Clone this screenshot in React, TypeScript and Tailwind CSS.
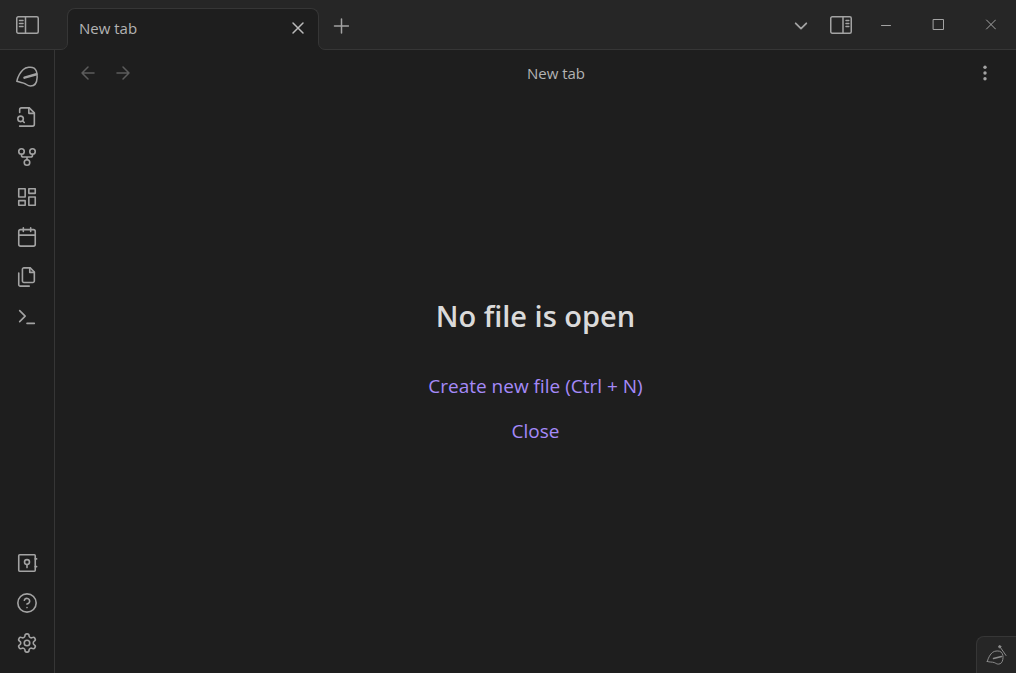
import type { ReactNode } from "react";

type IconProps = { children: ReactNode; className?: string; box?: string; stroke?: number };

function Icon({ children, className = "size-[22px]", box = "0 0 24 24", stroke = 1.75 }: IconProps) {
  return (
    <svg
      className={className}
      viewBox={box}
      fill="none"
      stroke="currentColor"
      strokeWidth={stroke}
      strokeLinecap="round"
      strokeLinejoin="round"
      aria-hidden="true"
    >
      {children}
    </svg>
  );
}

function IconButton({ label, className, children }: { label: string; className: string; children: ReactNode }) {
  return (
    <button type="button" aria-label={label} className={`flex shrink-0 items-center justify-center ${className}`}>
      {children}
    </button>
  );
}

const topTools = [
  {
    label: "Copilot",
    icon: (
      <Icon box="0 0 22 22" stroke={1.5}>
        <path d="M.8 15.300C1.600 11.500 3.800 6.800 7.300 3.500 10 1.100 15.300.3 18.100 2.200c2.700 1.900 3.200 5 3 9.400-.2 5-2.500 8.400-6.500 8.400-2.600 0-3.600-1.200-5.300-2.200-2.300-1.300-5-1.200-8.500-2.500z" />
        <path d="M8.500 11.600 20.400 8.200" strokeWidth="2.500" />
      </Icon>
    ),
  },
  {
    label: "Open quick switcher",
    icon: (
      <Icon>
        <path d="M4 22h14a2 2 0 0 0 2-2V7.500L14.500 2H6a2 2 0 0 0-2 2v3" />
        <path d="M14 2v6h6" />
        <circle cx="5" cy="14" r="3" />
        <path d="m9 18-1.500-1.500" />
      </Icon>
    ),
  },
  {
    label: "Open graph view",
    icon: (
      <Icon>
        <circle cx="12" cy="18" r="3" />
        <circle cx="6" cy="6" r="3" />
        <circle cx="18" cy="6" r="3" />
        <path d="M18 9v1a2 2 0 0 1-2 2H8a2 2 0 0 1-2-2V9M12 12v3" />
      </Icon>
    ),
  },
  {
    label: "Create new canvas",
    icon: (
      <Icon>
        <path d="M3 3h7v9H3zM14 3h7v5h-7zM14 12h7v9h-7zM3 16h7v5H3z" />
      </Icon>
    ),
  },
  {
    label: "Open daily note",
    icon: (
      <Icon>
        <rect x="3" y="4" width="18" height="18" rx="2" />
        <path d="M16 2v4M8 2v4M3 10h18" />
      </Icon>
    ),
  },
  {
    label: "Insert template",
    icon: (
      <Icon>
        <path d="M15.500 2H8.600c-.4 0-.8.2-1.100.5-.3.3-.5.7-.5 1.100v12.800c0 .4.2.8.5 1.100.3.3.7.5 1.100.5h9.800c.4 0 .8-.2 1.100-.5.3-.3.5-.7.5-1.100V6.500L15.500 2z" />
        <path d="M3 7.600v12.800c0 .4.2.8.5 1.100.3.3.7.5 1.100.5h9.800M15 2v5h5" />
      </Icon>
    ),
  },
  {
    label: "Open command palette",
    icon: (
      <Icon>
        <path d="m4 17 6-6-6-6M12 19h8" />
      </Icon>
    ),
  },
];

const bottomTools = [
  {
    label: "Open another vault",
    icon: (
      <Icon>
        <rect x="3" y="3" width="18" height="18" rx="1" />
        <circle cx="12" cy="11" r="2.700" />
        <path d="M12 14v3M21 7.500h1.500M21 16h1.500" />
      </Icon>
    ),
  },
  {
    label: "Help",
    icon: (
      <Icon>
        <circle cx="12" cy="12" r="10" />
        <path d="M9.090 9a3 3 0 0 1 5.830 1c0 2-3 3-3 3M12 17h.01" />
      </Icon>
    ),
  },
  {
    label: "Settings",
    icon: (
      <Icon>
        <path d="M12.220 2h-.44a2 2 0 0 0-2 2v.18a2 2 0 0 1-1 1.730l-.43.25a2 2 0 0 1-2 0l-.15-.08a2 2 0 0 0-2.730.73l-.22.38a2 2 0 0 0 .73 2.730l.15.1a2 2 0 0 1 1 1.720v.51a2 2 0 0 1-1 1.740l-.15.09a2 2 0 0 0-.73 2.730l.22.38a2 2 0 0 0 2.730.73l.15-.08a2 2 0 0 1 2 0l.43.25a2 2 0 0 1 1 1.730V20a2 2 0 0 0 2 2h.44a2 2 0 0 0 2-2v-.18a2 2 0 0 1 1-1.730l.43-.25a2 2 0 0 1 2 0l.15.08a2 2 0 0 0 2.730-.73l.22-.39a2 2 0 0 0-.73-2.730l-.15-.08a2 2 0 0 1-1-1.740v-.5a2 2 0 0 1 1-1.740l.15-.09a2 2 0 0 0 .73-2.730l-.22-.38a2 2 0 0 0-2.730-.73l-.15.08a2 2 0 0 1-2 0l-.43-.25a2 2 0 0 1-1-1.730V4a2 2 0 0 0-2-2z" />
        <circle cx="12" cy="12" r="3" />
      </Icon>
    ),
  },
];

function TabFlare({ className }: { className: string }) {
  return (
    <svg className={`absolute bottom-0 size-[7px] ${className}`} viewBox="0 0 7 7" fill="none" aria-hidden="true">
      <path d="M0 6.500A6.500 6.500 0 0 0 6.500 0H7v7H0z" fill="#1e1e1e" />
      <path d="M0 6.500A6.500 6.500 0 0 0 6.500 0" stroke="#363636" />
    </svg>
  );
}

function TitleBar() {
  return (
    <header className="flex h-[50px] shrink-0 items-stretch bg-[#262626] text-[#a3a3a3] shadow-[inset_0_-1px_0_#363636]">
      <IconButton label="Collapse left sidebar" className="w-[54px]">
        <Icon className="h-5 w-6" box="0 0 24 20" stroke={1.5}>
          <rect x="1.750" y="1.750" width="21.500" height="16.500" rx="1.500" />
          <path d="M10.500 2v16M4.500 5.500h3.500M4.500 8.500h3.500M4.500 11.500h3.500" />
        </Icon>
      </IconButton>
      <div className="relative ml-[13px] mt-2 flex w-[252px] items-center justify-between rounded-t-lg border-x border-t border-[#363636] bg-[#1e1e1e] pb-1 pl-[11px] pr-3">
        <TabFlare className="right-full" />
        <TabFlare className="left-full -scale-x-100" />
        <span className="text-[15px] leading-5 text-[#b3b3b3]">New tab</span>
        <IconButton label="Close tab" className="size-4 text-[#bababa]">
          <Icon className="size-4" box="0 0 16 16" stroke={1.5}>
            <path d="m3 3 10 10M13 3 3 13" />
          </Icon>
        </IconButton>
      </div>
      <IconButton label="New tab" className="w-11 pt-[2px]">
        <Icon className="size-4" box="0 0 16 16" stroke={1.5}>
          <path d="M8.500 1v14M1.500 8h14" />
        </Icon>
      </IconButton>
      <div className="flex-1" />
      <IconButton label="Tab list" className="w-[42px]">
        <Icon className="size-4" box="0 0 16 16" stroke={1.8}>
          <path d="m2.700 6.300 5.300 5.300 5.300-5.300" />
        </Icon>
      </IconButton>
      <IconButton label="Expand right sidebar" className="w-[38px]">
        <Icon className="h-5 w-6" box="0 0 24 20" stroke={1.5}>
          <rect x="1.750" y="1.750" width="20.500" height="16.500" rx="1.500" />
          <path d="M14 2v16M17 5.500h2.800M17 8.500h2.800M17 11.500h2.800" />
        </Icon>
      </IconButton>
      <IconButton label="Minimize" className="w-[52px]">
        <Icon className="size-3" box="0 0 12 12" stroke={1}>
          <path d="M1.500 6.500h9" />
        </Icon>
      </IconButton>
      <IconButton label="Maximize" className="w-[52px]">
        <Icon className="size-3" box="0 0 12 12" stroke={1}>
          <path d="M1.500 .5h10v10h-10z" />
        </Icon>
      </IconButton>
      <IconButton label="Close window" className="w-[52px]">
        <Icon className="size-3" box="0 0 12 12" stroke={1}>
          <path d="m2.500 1 9 9M11.500 1l-9 9" />
        </Icon>
      </IconButton>
    </header>
  );
}

export default function App() {
  return (
    <div className="relative flex h-screen flex-col bg-[#1e1e1e] font-['Open_Sans','Noto_Sans',sans-serif] text-[#b3b3b3]">
      <TitleBar />
      <div className="flex min-h-0 flex-1">
        <aside className="flex w-[55px] shrink-0 flex-col justify-between border-r border-[#363636] pb-[10px] pt-[7px] text-[#a3a3a3]">
          <div className="flex flex-col">
            {topTools.map((tool) => (
              <IconButton key={tool.label} label={tool.label} className="h-10">
                {tool.icon}
              </IconButton>
            ))}
          </div>
          <div className="flex flex-col">
            {bottomTools.map((tool) => (
              <IconButton key={tool.label} label={tool.label} className="h-10">
                {tool.icon}
              </IconButton>
            ))}
          </div>
        </aside>
        <main className="flex min-w-0 flex-1 flex-col">
          <div className="flex h-[46px] shrink-0 items-center pl-[15px] pr-3">
            <IconButton label="Navigate back" className="h-8 w-[35px] text-[#5c5c5c]">
              <Icon className="size-4" box="0 0 16 16" stroke={1.5}>
                <path d="M14 8H2M8 2 2 8l6 6" />
              </Icon>
            </IconButton>
            <IconButton label="Navigate forward" className="h-8 w-[35px] text-[#5c5c5c]">
              <Icon className="size-4" box="0 0 16 16" stroke={1.5}>
                <path d="M2 8h12M8 2l6 6-6 6" />
              </Icon>
            </IconButton>
            <span className="flex-1 pl-[6px] text-center text-[15px] leading-5">New tab</span>
            <IconButton label="More options" className="h-8 w-[38px] text-[#a3a3a3]">
              <svg className="size-4" viewBox="0 0 16 16" fill="currentColor" aria-hidden="true">
                <circle cx="8" cy="2.200" r="1.700" />
                <circle cx="8" cy="8" r="1.700" />
                <circle cx="8" cy="13.800" r="1.700" />
              </svg>
            </IconButton>
          </div>
          <div className="flex flex-1 flex-col items-center justify-center pb-7">
            <h1 className="mb-9 text-[29px] font-semibold leading-10 text-[#dadada]">No file is open</h1>
            <div className="flex flex-col items-center gap-[17px] text-[19px] leading-7 text-[#a58af9]">
              <button type="button">Create new file (Ctrl + N)</button>
              <button type="button">Close</button>
            </div>
          </div>
        </main>
      </div>
      <div className="absolute bottom-0 right-0 flex h-[37px] w-10 items-center justify-center rounded-tl-lg border-l border-t border-[#363636] bg-[#262626] text-[#8c8c8c]">
        <Icon className="h-5 w-[21px]" box="0 0 21 20" stroke={1}>
          <path d="M1.300 16.500C2.300 12.500 4.300 9.200 6.600 7.300c2.300-1.700 6.800-1.900 8.700-.1 1.700 1.700 2 4.600 1.500 7.300-.5 2.900-2 4.500-4.200 4.600-2 .1-2.900-1-4.300-1.500-2.300-.8-4.700-.3-7-1.100z" />
          <path d="m7.500 13.600 8-2" strokeWidth="1.500" />
          <path d="m13.700 1.500 6.300 9" />
          <circle cx="13.700" cy="1.700" r="1.100" fill="currentColor" />
        </Icon>
      </div>
    </div>
  );
}
